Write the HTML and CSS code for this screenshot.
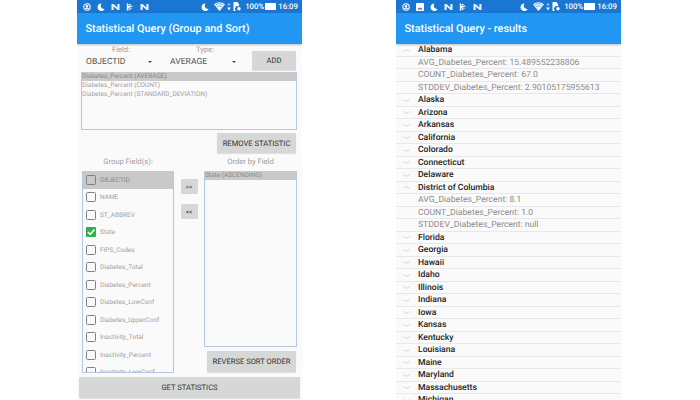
FILE: index.html
```html
<!DOCTYPE html>
<html>
	<head>
		<meta charset="UTF-8">
		<title>Statistical Query</title>
		<link rel="stylesheet" href="styles.css">
	</head>
	<body>
		<svg class="defs" width="0" height="0">
			<symbol id="i_circle" viewBox="0 0 8 8"><circle cx="4" cy="4" r="3.2" fill="none" stroke="#fff" stroke-width="1.1"/><circle cx="4" cy="3.4" r="1.3" fill="#fff"/><rect x="2.2" y="5" width="3.6" height="0.9" fill="#fff"/></symbol>
			<symbol id="i_moon" viewBox="0 0 8 8"><path d="M4.6 0.4A3.8 3.8 0 1 0 7.7 6 3.4 3.4 0 0 1 4.6 0.4Z" fill="#fff"/></symbol>
			<symbol id="i_n" viewBox="0 0 9 8"><path d="M0.5 1H2.6L6.4 4.4V1H8.5V7H6.6L2.6 3.6V7H0.5Z" fill="#fff" opacity="0.9"/></symbol>
			<symbol id="i_flag" viewBox="0 0 8 8"><path d="M0.8 0.5H2.4V3L7.4 3.6 2.4 5V7.5H0.8Z M3 0.8 6.4 2.6 3 2.4Z M3 5.6 6.4 5.2 3 7.2Z" fill="#fff"/></symbol>
			<symbol id="i_image" viewBox="0 0 8 8"><rect width="8" height="8" rx="0.8" fill="#fff"/><path d="M1.5 6.4 3.2 4.2 4.4 5.4 5.3 4.6 6.6 6.4Z" fill="#1976d2"/></symbol>
			<symbol id="i_wifi" viewBox="0 0 11 9"><path d="M0 2.4C3 -0.5 8 -0.5 11 2.4L5.5 9Z" fill="#fff" opacity="0.95"/><path d="M1.4 3.2C3.8 1.2 7.2 1.2 9.6 3.2M2.9 4.9C4.4 3.8 6.6 3.8 8.1 4.9" fill="none" stroke="#1976d2" stroke-width="0.6"/></symbol>
			<symbol id="i_arrows" viewBox="0 0 4 9"><path d="M2 0.5 3.8 3.4H0.2Z" fill="#8fbcec"/><path d="M2 8.5 3.8 5.4H0.2Z" fill="#fff"/></symbol>
			<symbol id="i_sim" viewBox="0 0 8 9"><path d="M0.5 0H4.2L6 2V4.4A2.4 2.4 0 0 0 3.4 9H0.5Z" fill="#fff"/><circle cx="6" cy="6.8" r="1.7" fill="#fff"/></symbol>
			<symbol id="i_down" viewBox="0 0 7 3"><path d="M0.5 0.6 3.5 2.3 6.5 0.6" fill="none" stroke="#c4c4c4" stroke-width="0.7"/></symbol>
			<symbol id="i_up" viewBox="0 0 7 3"><path d="M0.5 2.3 3.5 0.6 6.5 2.3" fill="none" stroke="#c4c4c4" stroke-width="0.7"/></symbol>
			<symbol id="i_check" viewBox="0 0 10 10"><rect width="10" height="10" rx="1" fill="#2eb24a"/><path d="M1.8 5 4.2 7.4 8.4 2.6" fill="none" stroke="#fff" stroke-width="1.6"/></symbol>
		</svg>

		<div class="phone">
			<div class="status">
				<div class="status_l">
					<svg class="ico8"><use href="#i_circle"/></svg>
					<svg class="ico8"><use href="#i_moon"/></svg>
					<svg class="ico9"><use href="#i_n"/></svg>
					<svg class="ico8"><use href="#i_flag"/></svg>
					<svg class="ico9"><use href="#i_n"/></svg>
				</div>
				<div class="status_r">
					<svg class="ico8"><use href="#i_moon"/></svg>
					<svg class="ico_wifi"><use href="#i_wifi"/></svg>
					<svg class="ico_arrows"><use href="#i_arrows"/></svg>
					<svg class="ico_sim"><use href="#i_sim"/></svg>
					<span class="pct">100%</span>
					<span class="battery"></span>
					<span class="time">16:09</span>
				</div>
			</div>
			<div class="title">Statistical Query (Group and Sort)</div>

			<div class="form">
				<div class="top_row">
					<div class="spinner">
						<div class="spinner_label">Field:</div>
						<div class="spinner_value"><span>OBJECTID</span><i class="arrow"></i></div>
					</div>
					<div class="spinner">
						<div class="spinner_label">Type:</div>
						<div class="spinner_value"><span>AVERAGE</span><i class="arrow"></i></div>
					</div>
					<a class="btn btn_add">ADD</a>
				</div>

				<ul class="list stat_list">
					<li class="on">Diabetes_Percent (AVERAGE)</li>
					<li>Diabetes_Percent (COUNT)</li>
					<li>Diabetes_Percent (STANDARD_DEVIATION)</li>
				</ul>

				<a class="btn btn_remove">REMOVE STATISTIC</a>

				<div class="columns">
					<div class="col col_group">
						<div class="col_title">Group Field(s):</div>
						<ul class="list group_list">
							<li class="on"><i class="box"></i>OBJECTID</li>
							<li><i class="box"></i>NAME</li>
							<li><i class="box"></i>ST_ABBREV</li>
							<li><svg class="checked"><use href="#i_check"/></svg>State</li>
							<li><i class="box"></i>FIPS_Codes</li>
							<li><i class="box"></i>Diabetes_Total</li>
							<li><i class="box"></i>Diabetes_Percent</li>
							<li><i class="box"></i>Diabetes_LowConf</li>
							<li><i class="box"></i>Diabetes_UpperConf</li>
							<li><i class="box"></i>Inactivity_Total</li>
							<li><i class="box"></i>Inactivity_Percent</li>
							<li><i class="box"></i>Inactivity_LowConf</li>
						</ul>
					</div>
					<div class="col_mid">
						<a class="btn btn_move">&gt;&gt;</a>
						<a class="btn btn_move">&lt;&lt;</a>
					</div>
					<div class="col col_order">
						<div class="col_title">Order by Field</div>
						<ul class="list order_list">
							<li class="on">State (ASCENDING)</li>
						</ul>
						<a class="btn btn_reverse">REVERSE SORT ORDER</a>
					</div>
				</div>
			</div>
			<a class="btn btn_get">GET STATISTICS</a>
		</div>

		<div class="phone">
			<div class="status">
				<div class="status_l">
					<svg class="ico8"><use href="#i_circle"/></svg>
					<svg class="ico8"><use href="#i_image"/></svg>
					<svg class="ico8"><use href="#i_moon"/></svg>
					<svg class="ico9"><use href="#i_n"/></svg>
					<svg class="ico8"><use href="#i_flag"/></svg>
					<svg class="ico9"><use href="#i_n"/></svg>
				</div>
				<div class="status_r">
					<svg class="ico8"><use href="#i_moon"/></svg>
					<svg class="ico_wifi"><use href="#i_wifi"/></svg>
					<svg class="ico_arrows"><use href="#i_arrows"/></svg>
					<svg class="ico_sim"><use href="#i_sim"/></svg>
					<span class="pct">100%</span>
					<span class="battery"></span>
					<span class="time">16:09</span>
				</div>
			</div>
			<div class="title">Statistical Query - results</div>

			<ul class="results">
				<li class="state"><svg class="chev"><use href="#i_up"/></svg>Alabama</li>
				<li class="stat">AVG_Diabetes_Percent: 15.489552238806</li>
				<li class="stat">COUNT_Diabetes_Percent: 67.0</li>
				<li class="stat">STDDEV_Diabetes_Percent: 2.90105175955613</li>
				<li class="state"><svg class="chev"><use href="#i_down"/></svg>Alaska</li>
				<li class="state"><svg class="chev"><use href="#i_down"/></svg>Arizona</li>
				<li class="state"><svg class="chev"><use href="#i_down"/></svg>Arkansas</li>
				<li class="state"><svg class="chev"><use href="#i_down"/></svg>California</li>
				<li class="state"><svg class="chev"><use href="#i_down"/></svg>Colorado</li>
				<li class="state"><svg class="chev"><use href="#i_down"/></svg>Connecticut</li>
				<li class="state"><svg class="chev"><use href="#i_down"/></svg>Delaware</li>
				<li class="state"><svg class="chev"><use href="#i_up"/></svg>District of Columbia</li>
				<li class="stat">AVG_Diabetes_Percent: 8.1</li>
				<li class="stat">COUNT_Diabetes_Percent: 1.0</li>
				<li class="stat">STDDEV_Diabetes_Percent: null</li>
				<li class="state"><svg class="chev"><use href="#i_down"/></svg>Florida</li>
				<li class="state"><svg class="chev"><use href="#i_down"/></svg>Georgia</li>
				<li class="state"><svg class="chev"><use href="#i_down"/></svg>Hawaii</li>
				<li class="state"><svg class="chev"><use href="#i_down"/></svg>Idaho</li>
				<li class="state"><svg class="chev"><use href="#i_down"/></svg>Illinois</li>
				<li class="state"><svg class="chev"><use href="#i_down"/></svg>Indiana</li>
				<li class="state"><svg class="chev"><use href="#i_down"/></svg>Iowa</li>
				<li class="state"><svg class="chev"><use href="#i_down"/></svg>Kansas</li>
				<li class="state"><svg class="chev"><use href="#i_down"/></svg>Kentucky</li>
				<li class="state"><svg class="chev"><use href="#i_down"/></svg>Louisiana</li>
				<li class="state"><svg class="chev"><use href="#i_down"/></svg>Maine</li>
				<li class="state"><svg class="chev"><use href="#i_down"/></svg>Maryland</li>
				<li class="state"><svg class="chev"><use href="#i_down"/></svg>Massachusetts</li>
				<li class="state"><svg class="chev"><use href="#i_down"/></svg>Michigan</li>
			</ul>
		</div>
	</body>
</html>
```

FILE: styles.css
```css
*{
	padding: 0;
	margin: 0;
	box-sizing: border-box;
}
li{
	list-style: none;
}
html,body{
	height: 400px;
	overflow: hidden;
}
body{
	background: #fff;
	display: flex;
	gap: 94px;
	padding-left: 77px;
	font-family: Roboto, "Liberation Sans", sans-serif;
	text-rendering: geometricPrecision;
}
.defs{
	position: absolute;
}
.phone{
	width: 225px;
	height: 400px;
	background: #fafafa;
	overflow: hidden;
	display: flex;
	flex-direction: column;
}

/* status bar */
.status{
	height: 13px;
	flex: none;
	background: #1976d2;
	display: flex;
	justify-content: space-between;
	align-items: center;
	padding: 0 4px 0 6px;
	color: #fff;
	font-size: 7.8px;
	font-weight: 500;
}
.status_l{
	display: flex;
	align-items: center;
	gap: 6px;
}
.status_r{
	display: flex;
	align-items: center;
}
.ico8{
	width: 8px;
	height: 8px;
}
.ico9{
	width: 9px;
	height: 8px;
}
.ico_wifi{
	width: 11px;
	height: 9px;
	margin-left: 5px;
}
.ico_arrows{
	width: 4px;
	height: 9px;
	margin-left: 2px;
}
.ico_sim{
	width: 8px;
	height: 9px;
	margin-left: 2px;
}
.pct{
	margin-left: 4px;
}
.battery{
	width: 11px;
	height: 7px;
	background: #fff;
	margin-left: 1px;
}
.time{
	margin-left: 2px;
}

.title{
	height: 31px;
	flex: none;
	background: #2196f3;
	color: #fff;
	font-size: 10.9px;
	font-weight: 500;
	line-height: 31px;
	padding-left: 8.5px;
	box-shadow: 0 1px 2px rgba(0,0,0,.25);
	position: relative;
}

/* buttons */
.btn{
	display: flex;
	align-items: center;
	justify-content: center;
	background: #d6d7d7;
	color: #333;
	font-size: 7.6px;
	font-weight: 400;
	border-radius: 1px;
	box-shadow: 0 1px 1px rgba(0,0,0,.12);
	white-space: nowrap;
}

/* form */
.form{
	flex: none;
	height: 329px;
	padding: 0 5px 0 4px;
	display: flex;
	flex-direction: column;
}
.top_row{
	display: flex;
	height: 28px;
}
.spinner{
	width: 80px;
	margin-right: 4px;
	padding-top: 1px;
}
.spinner_label{
	text-align: center;
	font-size: 7.5px;
	color: #a0a0a0;
	line-height: 9px;
}
.spinner_value{
	display: flex;
	align-items: center;
	padding-left: 5px;
	margin-top: 2px;
	height: 11px;
	font-size: 8.6px;
	color: #555;
}
.spinner_value span{
	width: 61.5px;
}
.arrow{
	width: 0;
	height: 0;
	border-left: 2.5px solid transparent;
	border-right: 2.5px solid transparent;
	border-top: 2.5px solid #444;
}
.btn_add{
	width: 44px;
	height: 19px;
	margin: 7px 0 0 3px;
}

.list{
	border: 1px solid #b3c6e6;
	border-top: 0;
	border-radius: 1px;
	font-size: 6.5px;
	color: #a0a0a0;
	overflow: hidden;
}
.list li.on{
	background: #c9c9c9;
	color: #888;
}
.stat_list{
	height: 58px;
}
.stat_list li{
	height: 9px;
	line-height: 9px;
	white-space: nowrap;
}
.btn_remove{
	align-self: flex-end;
	width: 79px;
	height: 20px;
	margin: 3px 1px 0 0;
}

.columns{
	display: flex;
	height: 216px;
	margin-top: 4px;
	padding-left: 1px;
}
.col{
	display: flex;
	flex-direction: column;
}
.col_title{
	height: 14px;
	line-height: 10px;
	text-align: center;
	font-size: 7.6px;
	color: #a0a0a0;
}
.col_group{
	width: 92px;
}
.group_list{
	flex: 1;
}
.group_list li{
	height: 17.5px;
	display: flex;
	align-items: center;
	padding-left: 3px;
	font-size: 6.5px;
	white-space: nowrap;
}
.box{
	width: 10px;
	height: 10px;
	border: 1.2px solid #808080;
	border-radius: 1.5px;
	margin-right: 4px;
	flex: none;
}
.checked{
	width: 10px;
	height: 10px;
	margin-right: 4px;
	flex: none;
}
.col_mid{
	width: 30px;
	padding-top: 22px;
	display: flex;
	flex-direction: column;
	align-items: center;
	gap: 10px;
}
.btn_move{
	width: 17px;
	height: 15px;
	font-size: 6.5px;
	box-shadow: none;
}
.col_order{
	width: 93px;
}
.order_list{
	height: 176px;
}
.order_list li{
	height: 9px;
	line-height: 9px;
}
.btn_reverse{
	width: 89px;
	height: 21px;
	margin: 4px 0 0 3px;
}
.btn_get{
	flex: none;
	height: 21px;
	margin: 4px 2px 0;
}

/* results */
.results{
	flex: 1;
	overflow: hidden;
	font-size: 8.6px;
}
.results li{
	height: 12.5px;
	padding-top: 1px;
	display: flex;
	align-items: center;
	border-bottom: 1px solid #e8e8e8;
	white-space: nowrap;
}
.state{
	color: #222;
	font-weight: 500;
	padding-left: 7px;
}
.stat{
	color: #8c8c8c;
	padding-left: 22px;
}
.chev{
	width: 7px;
	height: 3px;
	margin-right: 8px;
	flex: none;
}
```
